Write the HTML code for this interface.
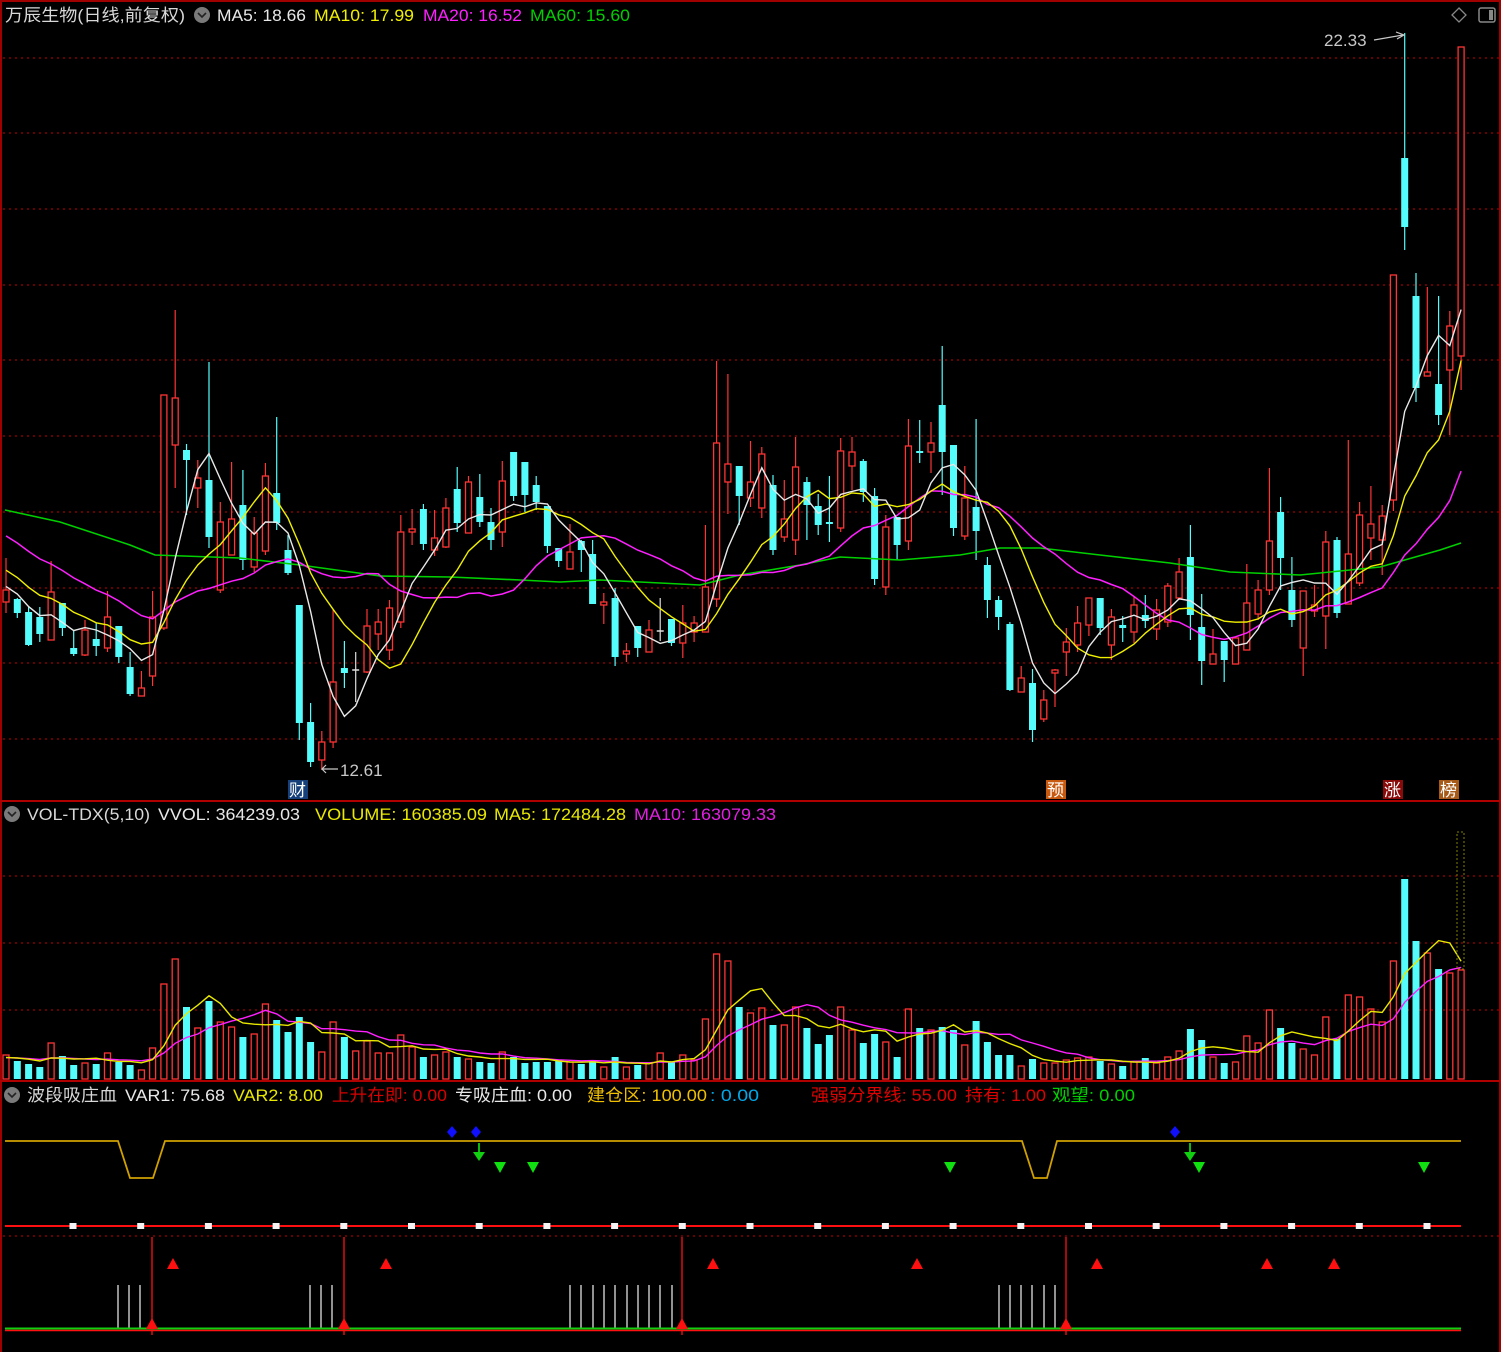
<!DOCTYPE html>
<html><head><meta charset="utf-8"><style>
html,body{margin:0;padding:0;background:#000;width:1501px;height:1352px;overflow:hidden}
svg{display:block}
text{font-family:"Liberation Sans","Noto Sans CJK SC",sans-serif;font-size:17px}
</style></head><body>
<svg id="s" width="1501" height="1352" xmlns="http://www.w3.org/2000/svg"></svg>
<script>
const K=[
['r',590,602,558,613],['c',599,613,598,618],['c',612,645,607,646],['c',617,634,607,642],['r',592,640,561,640],
['c',603,628,603,636],['c',648,654,631,656],['r',630,655,620,656],['c',639,646,623,656],['r',617,648,591,652],
['c',626,657,626,663],['c',667,694,652,696],['r',688,696,671,696],['r',617,676,591,686],['r',395,628,395,630],
['r',398,445,310,488],['c',450,460,444,515],['r',478,488,460,508],['c',480,537,362,548],['r',522,590,502,593],
['r',519,555,462,555],['c',505,560,470,570],['r',533,567,517,572],['r',476,551,463,555],['c',493,523,417,530],
['c',550,573,535,575],['c',605,723,605,740],['c',722,762,703,767],['r',742,760,731,770],['r',682,742,610,748],
['c',668,673,641,688],['w',670,670,652,702],['r',626,672,609,673],['r',622,634,609,650],['r',608,650,600,660],
['r',532,622,515,628],['r',529,532,509,545],['c',509,544,504,550],['r',538,550,510,556],['r',508,547,498,548],
['c',489,523,467,532],['r',482,533,476,533],['c',497,522,474,527],['c',522,540,508,550],['r',481,532,461,547],
['c',452,496,452,501],['c',462,495,462,512],['c',485,502,476,510],['c',506,546,506,553],['c',548,561,548,567],
['r',552,569,524,569],['c',541,550,540,572],['c',554,604,540,604],['r',602,605,593,624],['c',598,657,588,666],
['r',651,654,643,662],['c',626,648,626,657],['r',630,652,620,652],['w',631,631,598,641],['c',619,643,619,646],
['r',623,643,605,658],['r',623,632,616,642],['r',587,632,525,632],['r',443,599,361,607],['r',464,482,374,514],
['c',466,496,466,525],['r',482,498,441,507],['r',454,508,447,518],['c',485,550,475,555],['r',519,537,480,542],
['r',467,540,437,555],['c',482,505,477,540],['c',506,525,494,535],['c',522,524,476,542],['r',451,528,438,532],
['r',452,466,437,490],['c',461,492,459,502],['c',496,579,488,585],['r',527,587,515,595],['c',517,545,517,560],
['r',446,541,419,550],['c',451,453,420,463],['r',443,452,422,473],['c',405,452,346,495],['c',445,528,445,536],
['r',498,536,466,540],['c',507,531,419,560],['c',565,600,557,618],['c',600,617,596,630],['c',624,690,622,691],
['r',678,692,666,692],['c',683,730,669,742],['r',700,719,690,722],['r',670,673,669,707],['r',642,652,628,676],
['r',623,645,606,652],['r',598,625,598,636],['c',598,628,598,635],['r',617,645,609,660],['c',625,628,616,642],
['r',605,632,596,643],['c',615,621,595,628],['r',610,629,599,640],['r',586,622,583,627],['r',572,598,558,600],
['c',557,615,525,640],['c',627,661,594,685],['r',654,664,629,664],['c',641,660,641,682],['r',638,664,637,664],
['r',603,650,564,650],['r',590,614,580,620],['r',541,590,468,595],['c',512,558,497,590],['c',590,620,557,627],
['r',591,648,591,676],['r',605,611,585,617],['r',542,616,531,649],['c',540,613,537,618],['r',554,604,440,604],
['r',515,583,502,586],['r',524,538,486,560],['r',516,540,505,575],['r',275,500,275,511],['c',158,227,33,250],
['c',296,388,273,402],['r',372,376,287,376],['c',384,415,296,425],['r',326,370,311,435],['r',47,356,47,390]];
const V=[1055,1061,1064,1067,1043,1056,1065,1063,1064,1053,1062,1065,1070,1048,984,959,1007,1028,1001,1022,1027,1037,1034,1004,1020,1032,1017,1042,1052,1022,1037,1051,1041,1053,1053,1035,1047,1057,1055,1052,1057,1059,1062,1063,1052,1057,1063,1062,1062,1061,1062,1064,1060,1067,1057,1067,1065,1063,1053,1062,1055,1060,1019,954,961,1007,1013,
1008,1025,1025,1007,1028,1044,1035,1007,1030,1043,1034,1042,1057,1009,1028,1030,1027,1030,1045,1021,1042,1055,1055,1066,1059,1063,1063,1060,1058,1057,1061,1064,1066,1062,1058,1063,1057,1051,1029,1040,1057,1063,1062,1036,1043,1010,1028,1043,1049,1055,1017,1039,995,997,1009,1022,961,879,941,953,969,973,970];
const X=i=>6+11.28*i;
const RED='#ff3434',CY='#54fcfc';
let h='';
// frame
h+='<rect x="0" y="0" width="1501" height="2" fill="#a00000"/><rect x="0" y="0" width="2" height="1352" fill="#a00000"/><rect x="1499" y="0" width="2" height="1352" fill="#a00000"/>';
h+='<rect x="0" y="800" width="1501" height="2" fill="#b00000"/><rect x="0" y="1080" width="1501" height="2" fill="#b00000"/>';
// grids
const dots=(y)=>'<line x1="3" y1="'+y+'" x2="1499" y2="'+y+'" stroke="#a00000" stroke-width="1.2" stroke-dasharray="2,4"/>';
[58,133,209,285,360,436,512,588,663,739,876,943,1010,1236].forEach(y=>h+=dots(y));
// candles
K.forEach((k,i)=>{const x=X(i).toFixed(1);const [t,a,b,hi,lo]=k;
 if(t==='c'){h+='<line x1="'+x+'" y1="'+hi+'" x2="'+x+'" y2="'+lo+'" stroke="'+CY+'" stroke-width="1.2"/>';
  h+='<rect x="'+(X(i)-3.5).toFixed(1)+'" y="'+a+'" width="7" height="'+Math.max(2,b-a)+'" fill="'+CY+'"/>';}
 else if(t==='w'){h+='<line x1="'+x+'" y1="'+hi+'" x2="'+x+'" y2="'+lo+'" stroke="#ddd" stroke-width="1.2"/><line x1="'+(X(i)-3.5)+'" y1="'+a+'" x2="'+(X(i)+3.5)+'" y2="'+a+'" stroke="#ddd" stroke-width="1.5"/>';}
 else{ if(hi<a)h+='<line x1="'+x+'" y1="'+hi+'" x2="'+x+'" y2="'+a+'" stroke="'+RED+'" stroke-width="1.2"/>';
  if(lo>b)h+='<line x1="'+x+'" y1="'+b+'" x2="'+x+'" y2="'+lo+'" stroke="'+RED+'" stroke-width="1.2"/>';
  h+='<rect x="'+(X(i)-3).toFixed(1)+'" y="'+a+'" width="6" height="'+Math.max(2,b-a)+'" fill="#000" stroke="'+RED+'" stroke-width="1.3"/>';}
});
// MAs
const C=K.map(k=>k[0]==='c'?k[2]:k[1]);
const hist=[];for(let j=0;j<19;j++)hist.push(470+j*7);
const all=hist.concat(C);
function ma(arr,n,off){const r=[];for(let i=off;i<arr.length;i++){let s=0,c=0;for(let j=Math.max(0,i-n+1);j<=i;j++){s+=arr[j];c++;}r.push(s/c);}return r;}
const pl=(ys,col,w)=>'<polyline fill="none" stroke="'+col+'" stroke-width="'+w+'" points="'+ys.map((y,i)=>X(i).toFixed(1)+','+y.toFixed(1)).join(' ')+'"/>';
const m60=[[5,510],[60,522],[130,545],[155,555],[240,558],[300,565],[380,576],[450,577],[520,580],[560,582],[600,580],[640,582],[700,585],[740,575],[800,565],[840,557],[900,560],[960,555],[1000,548],[1040,548],[1100,555],[1170,563],[1230,572],[1300,575],[1380,567],[1440,550],[1461,543]];
h+='<polyline fill="none" stroke="#00d000" stroke-width="1.6" points="'+m60.map(p=>p.join(',')).join(' ')+'"/>';
h+=pl(ma(all,20,19),'#ff20ff',1.5);
h+=pl(ma(all,10,19),'#f0f000',1.4);
h+=pl(ma(all,5,19),'#e8e8e8',1.4);
// annotations
h+='<text x="1324" y="46" fill="#c8c8c8" font-size="16">22.33</text><path d="M1374 40 L1403 35 M1396 32 L1404 35 L1397 39" stroke="#c8c8c8" fill="none" stroke-width="1.2"/>';
h+='<path d="M322 769 L338 769 M326 765 L322 769 L326 773" stroke="#c8c8c8" fill="none" stroke-width="1.2"/><text x="340" y="776" fill="#c8c8c8" font-size="16">12.61</text>';
const tag=(x,bg,t)=>'<rect x="'+x+'" y="780" width="20" height="19" fill="'+bg+'"/><text x="'+(x+1)+'" y="796" fill="#fff" font-size="17">'+t+'</text>';
h+=tag(288,'#16407a','财')+tag(1046,'#c85a10','预')+tag(1383,'#8a0a0a','涨')+tag(1439,'#a85a18','榜');
h+='<path d="M1459 8 L1466 15 L1459 22 L1452 15 Z" fill="none" stroke="#888" stroke-width="1.3"/><rect x="1479" y="8" width="16" height="14" rx="2" fill="none" stroke="#888" stroke-width="1.5"/><rect x="1489" y="10" width="4" height="10" fill="#888"/>';
// headers
const T=(x,y,w,col,t)=>'<text x="'+x+'" y="'+y+'" fill="'+col+'" textLength="'+w+'" lengthAdjust="spacingAndGlyphs">'+t+'</text>';
const circ=(cx,cy)=>'<circle cx="'+cx+'" cy="'+cy+'" r="8" fill="#7a7a7a"/><path d="M'+(cx-4)+' '+(cy-2)+' L'+cx+' '+(cy+2)+' L'+(cx+4)+' '+(cy-2)+'" stroke="#222" stroke-width="1.6" fill="none"/>';
h+=T(5,21,180,'#d8d8d8','万辰生物(日线,前复权)')+circ(202,15)+T(217,21,89,'#e8e8e8','MA5: 18.66')+T(314,21,100,'#f0f000','MA10: 17.99')+T(423,21,99,'#ff20ff','MA20: 16.52')+T(530,21,100,'#00d000','MA60: 15.60');
h+=circ(12,814)+T(27,820,123,'#d8d8d8','VOL-TDX(5,10)')+T(158,820,142,'#e8e8e8','VVOL: 364239.03')+T(315,820,172,'#e8e800','VOLUME: 160385.09')+T(494,820,132,'#e8e800','MA5: 172484.28')+T(634,820,142,'#e020e0','MA10: 163079.33');
h+=circ(12,1095)+T(27,1101,90,'#d8d8d8','波段吸庄血')+T(125,1101,100,'#e8e8e8','VAR1: 75.68')+T(233,1101,90,'#e8e800','VAR2: 8.00')+T(332,1101,115,'#d80000','上升在即: 0.00')+T(455,1101,117,'#e8e8e8','专吸庄血: 0.00')+T(587,1101,120,'#f0c000','建仓区: 100.00')+T(710,1101,49,'#00a8e8',': 0.00')+T(811,1101,146,'#e00000','强弱分界线: 55.00')+T(965,1101,81,'#e00000','持有: 1.00')+T(1052,1101,83,'#00d000','观望: 0.00');
// volume bars
V.forEach((v,i)=>{const t=K[i][0];const x=X(i);
 if(t==='c')h+='<rect x="'+(x-3.5).toFixed(1)+'" y="'+v+'" width="7" height="'+(1079-v)+'" fill="'+CY+'"/>';
 else h+='<rect x="'+(x-3).toFixed(1)+'" y="'+v+'" width="6" height="'+(1079-v)+'" fill="none" stroke="'+RED+'" stroke-width="1.3"/>';});
const vh=[];for(let j=0;j<9;j++)vh.push(1058);const va=vh.concat(V);
h+=pl(ma(va,10,9),'#ff20ff',1.4);h+=pl(ma(va,5,9),'#e8e800',1.4);
h+='<rect x="1457" y="832" width="7" height="137" fill="none" stroke="#808000" stroke-width="1" stroke-dasharray="2,2"/>';
// indicator
h+='<polyline fill="none" stroke="#d0a000" stroke-width="1.8" points="5,1141 118,1141 130,1178 153,1178 165,1141 1022,1141 1034,1178 1047,1178 1057,1141 1461,1141"/>';
[452,476,1175].forEach(x=>h+='<path d="M'+x+' 1126 L'+(x+5)+' 1132 L'+x+' 1138 L'+(x-5)+' 1132 Z" fill="#1010ff"/>');
[479,1190].forEach(x=>h+='<line x1="'+x+'' +'" y1="1143" x2="'+x+'" y2="1155" stroke="#10d010" stroke-width="1.8"/><path d="M'+(x-6)+' 1152 L'+(x+6)+' 1152 L'+x+' 1161 Z" fill="#10d010"/>');
[500,533,950,1199,1424].forEach(x=>h+='<path d="M'+(x-6)+' 1162 L'+(x+6)+' 1162 L'+x+' 1173 Z" fill="#10e010"/>');
h+='<line x1="5" y1="1226" x2="1461" y2="1226" stroke="#ff1010" stroke-width="2"/>';
for(let j=0;j<21;j++){const x=73+67.7*j;h+='<rect x="'+(x-3.5).toFixed(1)+'" y="1223" width="7" height="6" fill="#f4f4f4"/>';}
[118,129,140,310,321,332,570,581,593,604,615,627,638,649,660,672,999,1010,1021,1032,1044,1055].forEach(x=>h+='<line x1="'+x+'" y1="1285" x2="'+x+'" y2="1328" stroke="#e0e0e0" stroke-width="1.3"/>');
h+='<line x1="5" y1="1328.5" x2="1461" y2="1328.5" stroke="#10d010" stroke-width="2"/><line x1="5" y1="1330.5" x2="1461" y2="1330.5" stroke="#ff1010" stroke-width="1.6"/>';
[152,344,682,1066].forEach(x=>h+='<line x1="'+x+'" y1="1237" x2="'+x+'" y2="1335" stroke="#ff1010" stroke-width="1.3"/><path d="M'+(x-6)+' 1329 L'+(x+6)+' 1329 L'+x+' 1318 Z" fill="#ff1010"/>');
[173,386,713,917,1097,1267,1334].forEach(x=>h+='<path d="M'+(x-6)+' 1269 L'+(x+6)+' 1269 L'+x+' 1258 Z" fill="#ff1010"/>');
document.getElementById('s').innerHTML=h;
</script>
</body></html>
